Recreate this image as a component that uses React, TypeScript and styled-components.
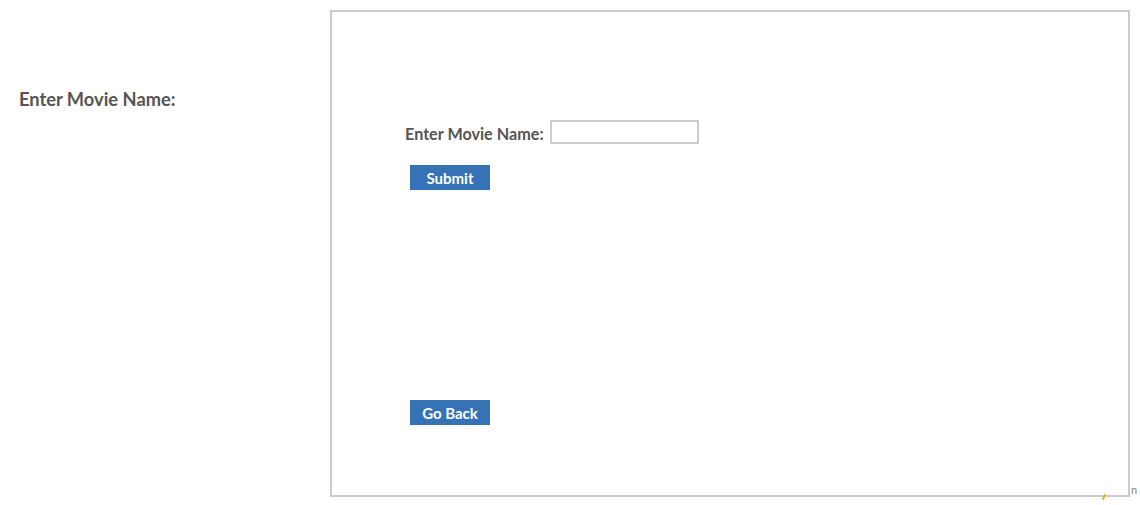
import styled, { createGlobalStyle } from "styled-components";

const GlobalStyle = createGlobalStyle`
  body {
    margin: 0;
    background: #fff;
    font-family: Lato, "Liberation Sans", sans-serif;
    color: #555;
  }
`;

const Page = styled.div`
  display: flex;
  align-items: flex-start;
  height: 505px;
  overflow: hidden;
  position: relative;
`;

const Sidebar = styled.aside`
  flex: 0 0 311px;
  padding: 88px 0 0 19px;
`;

const SideLabel = styled.h3`
  margin: 0;
  font-size: 18.3px;
  font-weight: 700;
  color: #555;
`;

const Frame = styled.section`
  flex: 0 0 auto;
  margin-top: 10px;
  width: 723px;
  height: 483px;
  border: 2px solid #ccc;
  display: flex;
  flex-direction: column;
  align-items: flex-start;
  padding-left: 73px;
  box-sizing: content-box;
`;

const Form = styled.form`
  margin-top: 108px;
  display: flex;
  flex-direction: column;
  align-items: flex-start;
`;

const Row = styled.div`
  display: flex;
  align-items: center;
  gap: 6px;
`;

const Label = styled.label`
  padding-top: 2px;
  font-size: 16.2px;
  font-weight: 700;
  color: #555;
`;

const Input = styled.input`
  width: 145px;
  height: 20px;
  border: 2px solid #ccc;
  padding: 0;
  margin: 0;
  outline: none;
`;

const Button = styled.button<{ $top: number }>`
  margin: ${(p) => p.$top}px 0 0 5px;
  width: 80px;
  height: 25px;
  border: none;
  background: #3572b6;
  color: #fff;
  font-family: Lato, "Liberation Sans", sans-serif;
  font-size: 15px;
  font-weight: 700;
  padding: 0;
  cursor: pointer;
`;

const Corner = styled.span`
  position: absolute;
  left: 1131px;
  top: 483px;
  font-size: 11px;
  color: #888;
`;

const Spark = styled.span`
  position: absolute;
  left: 1103px;
  top: 494px;
  width: 2px;
  height: 6px;
  background: #f5a623;
  transform: rotate(25deg);
`;

export default function App() {
  return (
    <>
      <GlobalStyle />
      <Page>
        <Sidebar>
          <SideLabel>Enter Movie Name:</SideLabel>
        </Sidebar>
        <Frame>
          <Form onSubmit={(e) => e.preventDefault()}>
            <Row>
              <Label htmlFor="movie">Enter Movie Name:</Label>
              <Input id="movie" type="text" />
            </Row>
            <Button type="submit" $top={21}>
              Submit
            </Button>
          </Form>
          <Button type="button" $top={210}>
            Go Back
          </Button>
        </Frame>
        <Spark />
        <Corner>n</Corner>
      </Page>
    </>
  );
}
